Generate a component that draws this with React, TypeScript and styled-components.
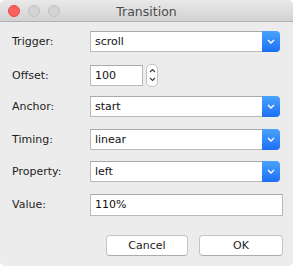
import React from "react";
import styled, { createGlobalStyle } from "styled-components";

const GlobalStyle = createGlobalStyle`
  html, body {
    margin: 0;
    padding: 0;
    background: #ffffff;
  }
  body {
    font-family: "Lucida Grande", "DejaVu Sans", sans-serif;
  }
`;

interface FieldRow {
  label: string;
  value: string;
  kind: "select" | "stepper" | "text";
}

const rows: FieldRow[] = [
  { label: "Trigger:", value: "scroll", kind: "select" },
  { label: "Offset:", value: "100", kind: "stepper" },
  { label: "Anchor:", value: "start", kind: "select" },
  { label: "Timing:", value: "linear", kind: "select" },
  { label: "Property:", value: "left", kind: "select" },
  { label: "Value:", value: "110%", kind: "text" },
];

const Chevron = () => (
  <svg width="8" height="5" viewBox="0 0 8 5">
    <path d="M1 1 L4 4 L7 1" fill="none" stroke="#ffffff" strokeWidth="1.4" />
  </svg>
);

const StepArrows = () => (
  <svg width="7" height="16" viewBox="0 0 7 16">
    <path d="M1 5 L3.5 2.5 L6 5" fill="none" stroke="#3a3a3a" strokeWidth="1.1" />
    <path d="M1 11 L3.5 13.5 L6 11" fill="none" stroke="#3a3a3a" strokeWidth="1.1" />
  </svg>
);

const App = () => {
  return (
    <>
      <GlobalStyle />
      <Window>
        <TitleBar>
          <Lights>
            <Light color="#fc605c" border="#de4a46" />
            <Light color="#d3d3d3" border="#c0c0c0" />
            <Light color="#d3d3d3" border="#c0c0c0" />
          </Lights>
          <Title>Transition</Title>
        </TitleBar>
        <Form>
          {rows.map((row) => (
            <Row key={row.label}>
              <Label>{row.label}</Label>
              {row.kind === "select" && (
                <Select>
                  <SelectValue>{row.value}</SelectValue>
                  <SelectButton>
                    <Chevron />
                  </SelectButton>
                </Select>
              )}
              {row.kind === "stepper" && (
                <StepperGroup>
                  <TextBox width={53}>{row.value}</TextBox>
                  <Stepper>
                    <StepArrows />
                  </Stepper>
                </StepperGroup>
              )}
              {row.kind === "text" && <TextBox width={193}>{row.value}</TextBox>}
            </Row>
          ))}
        </Form>
        <Buttons>
          <Button width={82}>Cancel</Button>
          <Button width={84}>OK</Button>
        </Buttons>
      </Window>
    </>
  );
};

const Window = styled.div`
  width: 293px;
  height: 266px;
  box-sizing: border-box;
  background: #ececec;
  border-radius: 5px;
  overflow: hidden;
  display: flex;
  flex-direction: column;
`;

const TitleBar = styled.div`
  height: 22px;
  box-sizing: border-box;
  position: relative;
  display: flex;
  align-items: center;
  justify-content: center;
  background: linear-gradient(#e9e9e9, #d2d2d2);
  border-bottom: 1px solid #b1b1b1;
`;

const Lights = styled.div`
  position: absolute;
  left: 8px;
  top: 5px;
  display: flex;
  gap: 8px;
`;

const Light = styled.div<{ color: string; border: string }>`
  width: 12px;
  height: 12px;
  box-sizing: border-box;
  border-radius: 50%;
  background: ${(p) => p.color};
  border: 1px solid ${(p) => p.border};
`;

const Title = styled.div`
  font-size: 12.5px;
  color: #4c4c4c;
  padding-top: 1px;
`;

const Form = styled.div`
  padding: 9px 10px 0 12px;
  display: flex;
  flex-direction: column;
  gap: 11.6px;
`;

const Row = styled.div`
  display: grid;
  grid-template-columns: 78px 1fr;
  align-items: center;
  height: 21px;
`;

const Label = styled.div`
  font-size: 11px;
  color: #1e1e1e;
`;

const Select = styled.div`
  display: flex;
  width: 190px;
  height: 21px;
`;

const SelectValue = styled.div`
  flex: 1;
  box-sizing: border-box;
  background: #ffffff;
  border: 1px solid #b9b9b9;
  border-right: none;
  border-top-color: #a9a9a9;
  padding-left: 4px;
  font-size: 11px;
  color: #111;
  display: flex;
  align-items: center;
`;

const SelectButton = styled.div`
  width: 18px;
  border-radius: 0 4px 4px 0;
  background: linear-gradient(#4aa3fd, #1c6ff4);
  display: flex;
  align-items: center;
  justify-content: center;
`;

const StepperGroup = styled.div`
  display: flex;
  align-items: center;
  gap: 3px;
`;

const TextBox = styled.div<{ width: number }>`
  width: ${(p) => p.width}px;
  height: ${(p) => (p.width > 100 ? 22 : 21)}px;
  box-sizing: border-box;
  background: #ffffff;
  border: 1px solid #b9b9b9;
  border-top-color: #a9a9a9;
  padding-left: 4px;
  font-size: 11px;
  color: #111;
  display: flex;
  align-items: center;
`;

const Stepper = styled.div`
  width: 12px;
  height: 23px;
  box-sizing: border-box;
  background: #ffffff;
  border: 1px solid #c3c3c3;
  border-radius: 5px;
  display: flex;
  align-items: center;
  justify-content: center;
`;

const Buttons = styled.div`
  margin-top: auto;
  padding: 0 10px 10px 0;
  display: flex;
  justify-content: flex-end;
  gap: 11px;
`;

const Button = styled.div<{ width: number }>`
  width: ${(p) => p.width}px;
  height: 21px;
  box-sizing: border-box;
  background: #ffffff;
  border: 1px solid #c5c5c5;
  border-bottom-color: #acacac;
  border-radius: 4px;
  font-size: 11px;
  color: #1e1e1e;
  display: flex;
  align-items: center;
  justify-content: center;
`;

export default App;
